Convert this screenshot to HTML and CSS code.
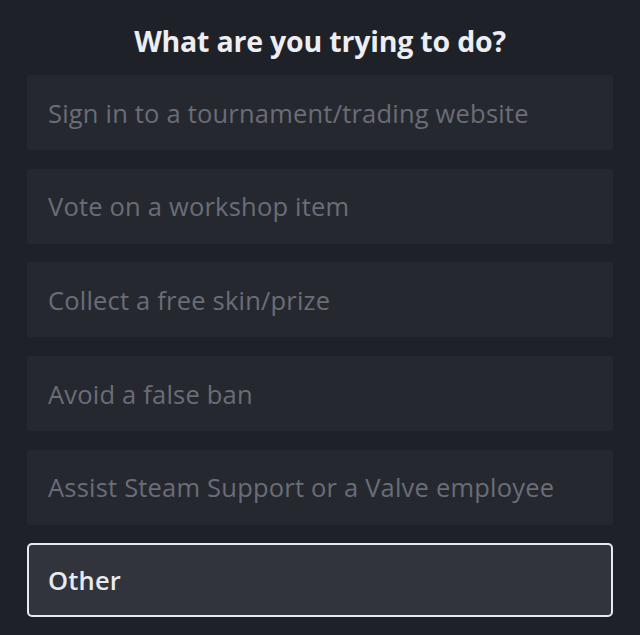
FILE: index.html
```html
<!DOCTYPE html>
<html>
<head>
<meta charset="utf-8">
<link rel="stylesheet" href="styles.css">
</head>
<body>
<div class="page">
  <h1 class="title">What are you trying to do?</h1>
  <div class="options">
    <div class="option">Sign in to a tournament/trading website</div>
    <div class="option">Vote on a workshop item</div>
    <div class="option">Collect a free skin/prize</div>
    <div class="option">Avoid a false ban</div>
    <div class="option">Assist Steam Support or a Valve employee</div>
    <div class="option selected">Other</div>
  </div>
</div>
</body>
</html>
```
FILE: styles.css
```css
html, body {
  margin: 0;
  padding: 0;
  background: #1f2128;
}
body {
  font-family: "Open Sans", "Noto Sans", sans-serif;
  width: 640px;
  height: 635px;
  overflow: hidden;
}
.page {
  padding: 21px 27px 0 27px;
}
.title {
  margin: 0;
  text-align: center;
  color: #eceef3;
  font-size: 28.5px;
  font-weight: 700;
  line-height: 40px;
  letter-spacing: -0.2px;
}
.options {
  margin-top: 14px;
  display: flex;
  flex-direction: column;
  gap: 18.7px;
}
.option {
  height: 75px;
  box-sizing: border-box;
  padding: 0 21px;
  display: flex;
  align-items: center;
  background: #262830;
  border-radius: 3px;
  color: #6a6d77;
  font-size: 25.5px;
  letter-spacing: 0.2px;
}
.option.selected {
  height: 74px;
  background: #32343d;
  border: 2px solid #e8eaef;
  border-radius: 5px;
  padding: 0 19px;
  color: #e8eaef;
  font-weight: 600;
}
```
